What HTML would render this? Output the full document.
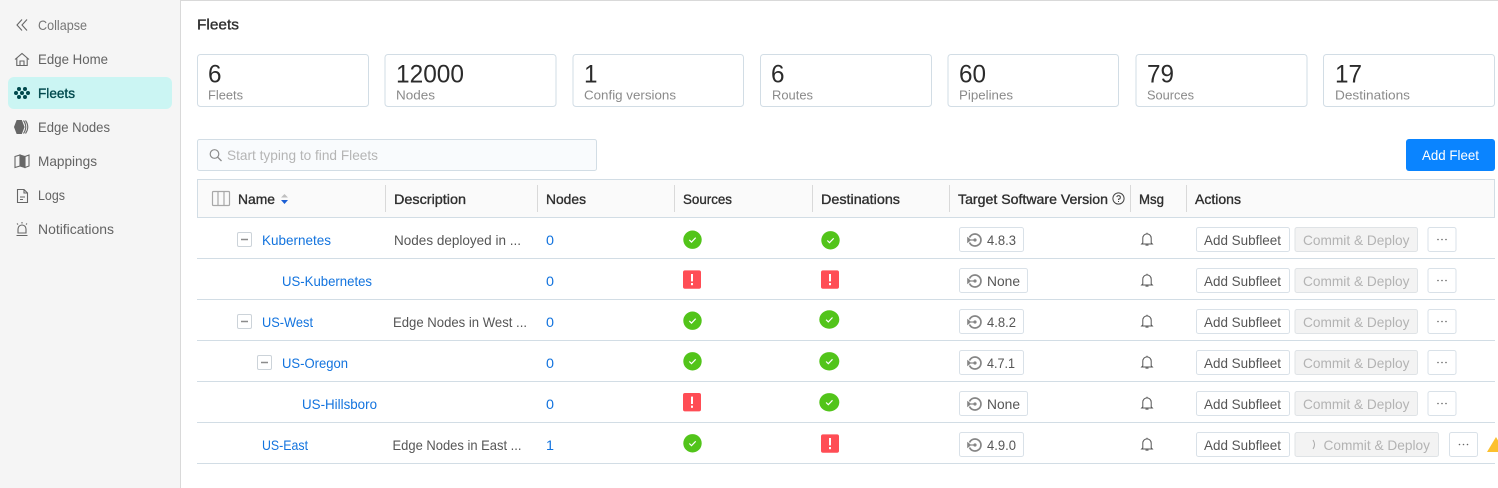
<!DOCTYPE html>
<html><head><meta charset="utf-8"><title>Fleets</title>
<style>
html,body{margin:0;padding:0;background:#fff;width:1498px;height:488px;overflow:hidden}
svg{display:block}
text{font-family:"Liberation Sans",sans-serif;font-size:14px;fill:#565656}
.s{fill:#636363}
.b{fill:#2f2f2f;stroke:#2f2f2f;stroke-width:.35px;font-size:13.8px}
.n{font-size:25px;fill:#2b2b2b}
.l{font-size:13px;fill:#8a8a8a}
.a{fill:#1273de}
.d{fill:#b3b3b3}
.line{stroke:#d2dde5;stroke-width:1;fill:none}
.card{fill:#fff;stroke:#d2dde5}
.btn{fill:#fff;stroke:#d9e1e8}
.dis{fill:#f3f3f3;stroke:#dfe3e6}
.ic{fill:none;stroke:#666;stroke-width:1.1}
</style></head><body>
<svg width="1498" height="488" viewBox="0 0 1498 488" xmlns="http://www.w3.org/2000/svg">
<defs>
<g id="ok"><circle r="9.2" fill="#52c41a"/><path d="M-3.2 .2L-1 2.4L3.2-2" fill="none" stroke="#fff" stroke-width="1.2"/></g>
<g id="okb"><ellipse rx="10" ry="9.2" fill="#52c41a"/><path d="M-3.2 .2L-1 2.4L3.2-2" fill="none" stroke="#fff" stroke-width="1.2"/></g>
<g id="er"><rect width="18" height="18.4" rx="2" fill="#ff4d55"/><rect x="8" y="3.600" width="2" height="7.400" fill="#fff"/><rect x="8" y="12.600" width="2" height="2.200" fill="#fff"/></g>
<g id="hist"><path d="M-5.500-2.500A6 6 0 1 1 -5.500 2.500" fill="none" stroke="#858585" stroke-width="1.700"/><circle r="1.600" fill="#858585"/><path d="M-7.800-3.200L-3.600 0L-7.800 3.200Z" fill="#858585"/><path d="M-4 0H0" stroke="#858585" stroke-width="1.200"/></g>
<g id="bell"><path d="M-4.200 3.400V-1.400A4.200 4.200 0 0 1 4.200-1.400V3.400L5.300 4.500H-5.300Z" fill="none" stroke="#555" stroke-width="1"/><path d="M-1.500 5.600H1.500M0-6.800V-5.600" stroke="#555" stroke-width="1"/></g>
<g id="minus"><rect x=".5" y=".5" width="14" height="14" rx="1.500" fill="#fff" stroke="#ccd3d9"/><path d="M4 7.500H11" stroke="#8c8c8c" stroke-width="1.500"/></g>
<g id="dots"><circle cx="-4" r=".8" fill="#666"/><circle r=".8" fill="#666"/><circle cx="4" r=".8" fill="#666"/></g>
</defs>

<!-- sidebar -->
<rect width="180" height="488" fill="#f5f5f5"/>
<rect x="180" y="0" width="1" height="488" fill="#d9d9d9"/>
<rect x="180" y="0" width="1318" height="1" fill="#d9d9d9"/>
<rect x="8" y="77" width="164" height="32" rx="6" fill="#cbf5f3"/>

<path d="M22 19.500L17 25L22 30.500M27 19.500L22 25L27 30.500" class="ic"/>
<text x="38" y="30" textLength="49" lengthAdjust="spacingAndGlyphs" style="fill:#777">Collapse</text>
<path d="M15 59.500L22 53.500L29 59.500M16.800 58V65.500H27.200V58M20 65.500V61H24V65.500" class="ic"/>
<text x="38" y="64" textLength="70" lengthAdjust="spacingAndGlyphs" class="s">Edge Home</text>
<g fill="#00494d"><circle cx="19" cy="89" r="2"/><circle cx="25" cy="89" r="2"/><circle cx="16" cy="93" r="2"/><circle cx="22" cy="93" r="2"/><circle cx="28" cy="93" r="2"/><circle cx="19" cy="97" r="2"/><circle cx="25" cy="97" r="2"/></g>
<text x="38" y="98" textLength="37" lengthAdjust="spacingAndGlyphs" style="fill:#00494d;stroke:#00494d;stroke-width:.35px">Fleets</text>
<path d="M17 120.500H21.500L24 127L21.500 133.500H17L14.500 127Z" fill="#666" stroke="#666"/><path d="M23.500 120.500Q28 127 23.500 133.500M25.500 120.500Q30 127 25.500 133.500" class="ic"/>
<text x="38" y="132" textLength="72" lengthAdjust="spacingAndGlyphs" class="s">Edge Nodes</text>
<path d="M15 156.500L20 155V166L15 167.500ZM20 155L25 156.500V167.500L20 166ZM25 156.500L29 155V166L25 167.500Z" fill="none" stroke="#666" stroke-width="1.100"/><path d="M20 155L25 156.500V167.500L20 166Z" fill="#666"/>
<text x="38" y="166" textLength="59" lengthAdjust="spacingAndGlyphs" class="s">Mappings</text>
<path d="M17.500 189.500H24L27.500 193V202.500H17.500ZM24 189.500V193H27.500M20 197H25M20 199.500H23" class="ic"/>
<text x="38" y="200" textLength="27" lengthAdjust="spacingAndGlyphs" class="s">Logs</text>
<path d="M18 233V229A4 4 0 0 1 26 229V233ZM16.500 235.500H27.500M22 222V223.500M17 223.500L18 224.500M27 223.500L26 224.500" class="ic"/>
<text x="38" y="234" textLength="76" lengthAdjust="spacingAndGlyphs" class="s">Notifications</text>

<!-- title -->
<text x="197" y="29.300" textLength="42" lengthAdjust="spacingAndGlyphs" style="stroke:#2f2f2f;stroke-width:.35px;fill:#2f2f2f;font-size:15px">Fleets</text>

<!-- cards -->
<rect class="card" x="197.500" y="54.500" width="171" height="52" rx="3"/>
<rect class="card" x="385" y="54.500" width="171" height="52" rx="3"/>
<rect class="card" x="573" y="54.500" width="170.500" height="52" rx="3"/>
<rect class="card" x="760.500" y="54.500" width="171" height="52" rx="3"/>
<rect class="card" x="948" y="54.500" width="170.500" height="52" rx="3"/>
<rect class="card" x="1136" y="54.500" width="171" height="52" rx="3"/>
<rect class="card" x="1323.500" y="54.500" width="171" height="52" rx="3"/>
<text class="n" x="208" y="82.700" textLength="13.500" lengthAdjust="spacingAndGlyphs">6</text>
<text class="l" x="208" y="99.500" textLength="35" lengthAdjust="spacingAndGlyphs">Fleets</text>
<text class="n" x="396" y="82.700" textLength="68" lengthAdjust="spacingAndGlyphs">12000</text>
<text class="l" x="396" y="99.500" textLength="39" lengthAdjust="spacingAndGlyphs">Nodes</text>
<text class="n" x="584" y="82.700" textLength="13.500" lengthAdjust="spacingAndGlyphs">1</text>
<text class="l" x="584" y="99.500" textLength="92" lengthAdjust="spacingAndGlyphs">Config versions</text>
<text class="n" x="771" y="82.700" textLength="13.500" lengthAdjust="spacingAndGlyphs">6</text>
<text class="l" x="772" y="99.500" textLength="41" lengthAdjust="spacingAndGlyphs">Routes</text>
<text class="n" x="959" y="82.700" textLength="27" lengthAdjust="spacingAndGlyphs">60</text>
<text class="l" x="959" y="99.500" textLength="54" lengthAdjust="spacingAndGlyphs">Pipelines</text>
<text class="n" x="1147" y="82.700" textLength="27" lengthAdjust="spacingAndGlyphs">79</text>
<text class="l" x="1147" y="99.500" textLength="47" lengthAdjust="spacingAndGlyphs">Sources</text>
<text class="n" x="1335" y="82.700" textLength="27" lengthAdjust="spacingAndGlyphs">17</text>
<text class="l" x="1335" y="99.500" textLength="75" lengthAdjust="spacingAndGlyphs">Destinations</text>

<!-- search -->
<rect x="197.500" y="139.500" width="399" height="31" rx="2" fill="#f9fbfd" stroke="#d2dde5"/>
<circle cx="214.500" cy="154" r="4.300" fill="none" stroke="#8c8c8c" stroke-width="1.200"/><path d="M217.700 157.200L221.500 161" stroke="#8c8c8c" stroke-width="1.300"/>
<text x="227" y="160" textLength="151" lengthAdjust="spacingAndGlyphs" style="fill:#b5b5b5">Start typing to find Fleets</text>
<rect x="1406" y="139" width="89" height="32" rx="3" fill="#0a84ff"/>
<text x="1422" y="160" textLength="57" lengthAdjust="spacingAndGlyphs" style="fill:#fff">Add Fleet</text>

<!-- table header -->
<rect x="197.500" y="179.500" width="1297" height="38" fill="#fafafa" stroke="#d2dde5"/>
<rect x="212.500" y="191.500" width="17" height="14" rx="1" fill="none" stroke="#a8a8a8" stroke-width="1.200"/><path d="M218 191.500V205.500M224 191.500V205.500" stroke="#a8a8a8" stroke-width="1.200"/>
<path d="M284.500 194L288 197.500H281Z" fill="#bfbfbf"/><path d="M281 200H288L284.500 204Z" fill="#1c5fd4"/>
<g fill="#d9d9d9"><rect x="385" y="185" width="1" height="27"/><rect x="537" y="185" width="1" height="27"/><rect x="674" y="185" width="1" height="27"/><rect x="812" y="185" width="1" height="27"/><rect x="949" y="185" width="1" height="27"/><rect x="1130" y="185" width="1" height="27"/><rect x="1186" y="185" width="1" height="27"/></g>
<text class="b" x="238" y="204" textLength="37" lengthAdjust="spacingAndGlyphs">Name</text>
<text class="b" x="394" y="204" textLength="72" lengthAdjust="spacingAndGlyphs">Description</text>
<text class="b" x="546" y="204" textLength="40" lengthAdjust="spacingAndGlyphs">Nodes</text>
<text class="b" x="683" y="204" textLength="49" lengthAdjust="spacingAndGlyphs">Sources</text>
<text class="b" x="821" y="204" textLength="79" lengthAdjust="spacingAndGlyphs">Destinations</text>
<text class="b" x="958" y="204" textLength="150" lengthAdjust="spacingAndGlyphs">Target Software Version</text>
<circle cx="1118.500" cy="198.500" r="5.600" fill="none" stroke="#444" stroke-width="1"/><path d="M1116.800 197A1.800 1.800 0 1 1 1118.500 199.200V200M1118.500 201V202" fill="none" stroke="#444" stroke-width="1"/>
<text class="b" x="1139" y="204" textLength="25" lengthAdjust="spacingAndGlyphs">Msg</text>
<text class="b" x="1195" y="204" textLength="46" lengthAdjust="spacingAndGlyphs">Actions</text>

<!-- row lines -->
<path class="line" d="M197 258.500H1495M197 299.500H1495M197 340.500H1495M197 381.500H1495M197 422.500H1495M197 463.500H1495"/>

<!-- names -->
<use href="#minus" x="237" y="232"/>
<use href="#minus" x="237" y="314"/>
<use href="#minus" x="257" y="355"/>
<text class="a" x="262" y="244.800" textLength="69" lengthAdjust="spacingAndGlyphs">Kubernetes</text>
<text class="a" x="282" y="285.800" textLength="90" lengthAdjust="spacingAndGlyphs">US-Kubernetes</text>
<text class="a" x="262" y="326.800" textLength="51" lengthAdjust="spacingAndGlyphs">US-West</text>
<text class="a" x="282" y="367.800" textLength="66" lengthAdjust="spacingAndGlyphs">US-Oregon</text>
<text class="a" x="302" y="408.800" textLength="75" lengthAdjust="spacingAndGlyphs">US-Hillsboro</text>
<text class="a" x="262" y="449.800" textLength="46" lengthAdjust="spacingAndGlyphs">US-East</text>

<!-- description -->
<text x="394" y="244.800" textLength="127" lengthAdjust="spacingAndGlyphs">Nodes deployed in ...</text>
<text x="393" y="326.800" textLength="134" lengthAdjust="spacingAndGlyphs">Edge Nodes in West ...</text>
<text x="392.500" y="449.800" textLength="129" lengthAdjust="spacingAndGlyphs">Edge Nodes in East ...</text>

<!-- nodes -->
<text class="a" x="546" y="244.800" textLength="8" lengthAdjust="spacingAndGlyphs">0</text>
<text class="a" x="546" y="285.800" textLength="8" lengthAdjust="spacingAndGlyphs">0</text>
<text class="a" x="546" y="326.800" textLength="8" lengthAdjust="spacingAndGlyphs">0</text>
<text class="a" x="546" y="367.800" textLength="8" lengthAdjust="spacingAndGlyphs">0</text>
<text class="a" x="546" y="408.800" textLength="8" lengthAdjust="spacingAndGlyphs">0</text>
<text class="a" x="546" y="449.800" textLength="8" lengthAdjust="spacingAndGlyphs">1</text>

<!-- status -->
<use href="#ok" x="692.500" y="239.700"/>
<use href="#ok" x="830.500" y="240.300"/>
<use href="#er" x="683" y="270.400"/>
<use href="#er" x="821" y="270.400"/>
<use href="#ok" x="692.500" y="320.700"/>
<use href="#okb" x="829.300" y="319.500"/>
<use href="#ok" x="692.500" y="361.300"/>
<use href="#okb" x="829.300" y="361.300"/>
<use href="#er" x="683" y="393"/>
<use href="#okb" x="829.300" y="402.300"/>
<use href="#ok" x="692.500" y="443.300"/>
<use href="#er" x="821" y="434.400"/>

<!-- versions -->
<rect class="btn" x="959.500" y="227.500" width="64" height="24" rx="2"/>
<rect class="btn" x="959.500" y="268.500" width="68" height="24" rx="2"/>
<rect class="btn" x="959.500" y="309.500" width="64" height="24" rx="2"/>
<rect class="btn" x="959.500" y="350.500" width="64" height="24" rx="2"/>
<rect class="btn" x="959.500" y="391.500" width="68" height="24" rx="2"/>
<rect class="btn" x="959.500" y="432.500" width="64" height="24" rx="2"/>
<use href="#hist" x="975" y="240"/><use href="#hist" x="975" y="281"/><use href="#hist" x="975" y="322"/><use href="#hist" x="975" y="363"/><use href="#hist" x="975" y="404"/><use href="#hist" x="975" y="445"/>
<text x="987" y="244.800" textLength="29" lengthAdjust="spacingAndGlyphs">4.8.3</text>
<text x="987" y="285.800" textLength="33" lengthAdjust="spacingAndGlyphs">None</text>
<text x="987" y="326.800" textLength="29" lengthAdjust="spacingAndGlyphs">4.8.2</text>
<text x="987" y="367.800" textLength="28" lengthAdjust="spacingAndGlyphs">4.7.1</text>
<text x="987" y="408.800" textLength="33" lengthAdjust="spacingAndGlyphs">None</text>
<text x="987" y="449.800" textLength="29" lengthAdjust="spacingAndGlyphs">4.9.0</text>

<!-- bells -->
<use href="#bell" x="1147" y="239.500"/><use href="#bell" x="1147" y="280.500"/><use href="#bell" x="1147" y="321.500"/><use href="#bell" x="1147" y="362.500"/><use href="#bell" x="1147" y="403.500"/><use href="#bell" x="1147" y="444.500"/>

<!-- actions -->
<rect class="btn" x="1196.500" y="227.500" width="93" height="24" rx="2"/><rect class="dis" x="1295" y="227.500" width="122.500" height="24" rx="2"/><rect class="btn" x="1428" y="227.500" width="28" height="24" rx="2"/>
<rect class="btn" x="1196.500" y="268.500" width="93" height="24" rx="2"/><rect class="dis" x="1295" y="268.500" width="122.500" height="24" rx="2"/><rect class="btn" x="1428" y="268.500" width="28" height="24" rx="2"/>
<rect class="btn" x="1196.500" y="309.500" width="93" height="24" rx="2"/><rect class="dis" x="1295" y="309.500" width="122.500" height="24" rx="2"/><rect class="btn" x="1428" y="309.500" width="28" height="24" rx="2"/>
<rect class="btn" x="1196.500" y="350.500" width="93" height="24" rx="2"/><rect class="dis" x="1295" y="350.500" width="122.500" height="24" rx="2"/><rect class="btn" x="1428" y="350.500" width="28" height="24" rx="2"/>
<rect class="btn" x="1196.500" y="391.500" width="93" height="24" rx="2"/><rect class="dis" x="1295" y="391.500" width="122.500" height="24" rx="2"/><rect class="btn" x="1428" y="391.500" width="28" height="24" rx="2"/>
<rect class="btn" x="1196.500" y="432.500" width="93" height="24" rx="2"/><rect class="dis" x="1295" y="432.500" width="143.500" height="24" rx="2"/><rect class="btn" x="1449.500" y="432.500" width="28" height="24" rx="2"/>
<text x="1204" y="244.800" textLength="77" lengthAdjust="spacingAndGlyphs">Add Subfleet</text>
<text x="1204" y="285.800" textLength="77" lengthAdjust="spacingAndGlyphs">Add Subfleet</text>
<text x="1204" y="326.800" textLength="77" lengthAdjust="spacingAndGlyphs">Add Subfleet</text>
<text x="1204" y="367.800" textLength="77" lengthAdjust="spacingAndGlyphs">Add Subfleet</text>
<text x="1204" y="408.800" textLength="77" lengthAdjust="spacingAndGlyphs">Add Subfleet</text>
<text x="1204" y="449.800" textLength="77" lengthAdjust="spacingAndGlyphs">Add Subfleet</text>
<text class="d" x="1303" y="244.800" textLength="106.500" lengthAdjust="spacingAndGlyphs">Commit &amp; Deploy</text>
<text class="d" x="1303" y="285.800" textLength="106.500" lengthAdjust="spacingAndGlyphs">Commit &amp; Deploy</text>
<text class="d" x="1303" y="326.800" textLength="106.500" lengthAdjust="spacingAndGlyphs">Commit &amp; Deploy</text>
<text class="d" x="1303" y="367.800" textLength="106.500" lengthAdjust="spacingAndGlyphs">Commit &amp; Deploy</text>
<text class="d" x="1303" y="408.800" textLength="106.500" lengthAdjust="spacingAndGlyphs">Commit &amp; Deploy</text>
<text class="d" x="1323.500" y="449.800" textLength="106.500" lengthAdjust="spacingAndGlyphs">Commit &amp; Deploy</text>
<path d="M1313 440Q1316 444.500 1313 449" fill="none" stroke="#a8a8a8" stroke-width="1"/>
<use href="#dots" x="1442" y="239.500"/><use href="#dots" x="1442" y="280.500"/><use href="#dots" x="1442" y="321.500"/><use href="#dots" x="1442" y="362.500"/><use href="#dots" x="1442" y="403.500"/><use href="#dots" x="1463.500" y="444.500"/>
<path d="M1487 452L1496 437L1505 452Z" fill="#fcc02e"/>
</svg>
</body></html>
